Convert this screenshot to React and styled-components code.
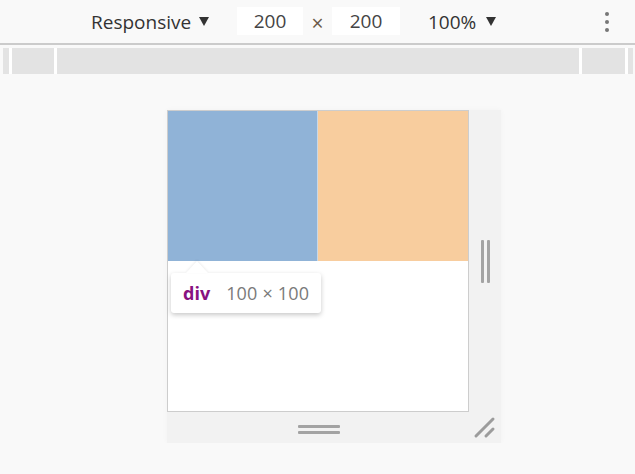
import styled, { createGlobalStyle } from 'styled-components';

const Global = createGlobalStyle`
  html, body {
    margin: 0;
    padding: 0;
    background: #f9f9f9;
    font-family: "Open Sans", "Noto Sans", sans-serif;
  }
`;

const Toolbar = styled.div`
  height: 45px;
  display: flex;
  align-items: center;
  padding: 0 26px 0 91px;
  border-bottom: 2px solid #cbcbcb;
  color: #333;
  font-size: 19px;
  box-sizing: border-box;
`;

const Caret = styled.span`
  display: inline-block;
  width: 0;
  height: 0;
  border-left: 5px solid transparent;
  border-right: 5px solid transparent;
  border-top: 9px solid #333;
  margin-left: ${(p) => p.$gap || 8}px;
`;

const Group = styled.div`
  display: flex;
  align-items: center;
  width: ${(p) => (p.$w ? `${p.$w}px` : 'auto')};
  margin-left: ${(p) => p.$before || 0}px;
`;

const SizeInput = styled.div`
  width: ${(p) => p.$w}px;
  height: 28px;
  margin-top: -2px;
  background: #fff;
  display: flex;
  align-items: center;
  justify-content: center;
  color: #444;
`;

const Times = styled.span`
  width: 29px;
  text-align: center;
  color: #6b5a48;
  font-size: 21px;
  margin-top: 2px;
`;

const Kebab = styled.div`
  margin-left: auto;
  display: flex;
  flex-direction: column;
  gap: 4px;
  span {
    width: 4px;
    height: 4px;
    border-radius: 50%;
    background: #777;
  }
`;

const MediaBar = styled.div`
  margin: 3px 2px 0 3px;
  height: 26px;
  display: flex;
  gap: 3px;
  background: #fff;
`;

const Segment = styled.div`
  background: #e3e3e3;
  width: ${(p) => (p.$w ? `${p.$w}px` : 'auto')};
  flex: ${(p) => (p.$w ? 'none' : 1)};
`;

const Stage = styled.div`
  display: flex;
  justify-content: center;
  padding: 36px 0 0 33px;
`;

const Frame = styled.div`
  display: grid;
  grid-template-columns: 302px 32px;
  grid-template-rows: 302px 31px;
  background: #f2f2f2;
  box-shadow: 0 0 6px rgba(0, 0, 0, 0.03);
`;

const Device = styled.div`
  position: relative;
  border: 1px solid #cdcdcd;
  background: #fff;
  display: grid;
  grid-template-columns: 150px 150px;
  grid-template-rows: 150px;
  align-content: start;
`;

const Box = styled.div`
  background: ${(p) => p.$color};
  border-right: ${(p) => (p.$divider ? '1px solid #c7d8e8' : 'none')};
  box-sizing: border-box;
`;

const Tooltip = styled.div`
  position: absolute;
  left: 3px;
  top: 162px;
  width: 150px;
  height: 40px;
  box-sizing: border-box;
  background: #fff;
  border-radius: 3px;
  box-shadow: 0 2px 5px rgba(0, 0, 0, 0.22);
  display: flex;
  align-items: center;
  padding-left: 12px;
  font-size: 18px;
  &::before {
    content: '';
    position: absolute;
    left: 15px;
    top: -12px;
    border-left: 11px solid transparent;
    border-right: 11px solid transparent;
    border-bottom: 12px solid #fff;
    filter: drop-shadow(0 -1px 1px rgba(0, 0, 0, 0.08));
  }
`;

const Tag = styled.span`
  color: #881280;
  font-weight: 700;
  margin-right: 16px;
`;

const Dims = styled.span`
  color: #7a7a7a;
  letter-spacing: 0.2px;
`;

const Gutter = styled.div`
  display: flex;
  flex-direction: ${(p) => (p.$side ? 'row' : 'column')};
  align-items: center;
  justify-content: center;
  gap: 3px;
  padding-top: ${(p) => (p.$side ? 0 : 3)}px;
  padding-left: ${(p) => (p.$side ? 0 : 2)}px;
`;

const Grip = styled.span`
  background: #a3a3a3;
  border-radius: 1px;
  width: ${(p) => (p.$side ? '3px' : '42px')};
  height: ${(p) => (p.$side ? '43px' : '3px')};
`;

const Corner = styled.div`
  display: flex;
`;

export default function App() {
  return (
    <>
      <Global />
      <Toolbar>
        <Group $w={146}>
          <span>Responsive</span>
          <Caret />
        </Group>
        <SizeInput $w={66}>200</SizeInput>
        <Times>×</Times>
        <SizeInput $w={68}>200</SizeInput>
        <Group $before={28}>
          <span>100%</span>
          <Caret $gap={10} />
        </Group>
        <Kebab>
          <span />
          <span />
          <span />
        </Kebab>
      </Toolbar>
      <MediaBar>
        <Segment $w={6} />
        <Segment $w={42} />
        <Segment />
        <Segment $w={43} />
        <Segment $w={5} />
      </MediaBar>
      <Stage>
        <Frame>
          <Device>
            <Box $color="#90b3d7" $divider />
            <Box $color="#f8cd9e" />
            <Tooltip>
              <Tag>div</Tag>
              <Dims>100 × 100</Dims>
            </Tooltip>
          </Device>
          <Gutter $side>
            <Grip $side />
            <Grip $side />
          </Gutter>
          <Gutter>
            <Grip />
            <Grip />
          </Gutter>
          <Corner>
            <svg width="32" height="31" viewBox="0 0 32 31">
              <g stroke="#9c9c9c" strokeWidth="3" strokeLinecap="round">
                <line x1="7" y1="24" x2="24" y2="7" />
                <line x1="17" y1="24" x2="24" y2="17" />
              </g>
            </svg>
          </Corner>
        </Frame>
      </Stage>
    </>
  );
}
